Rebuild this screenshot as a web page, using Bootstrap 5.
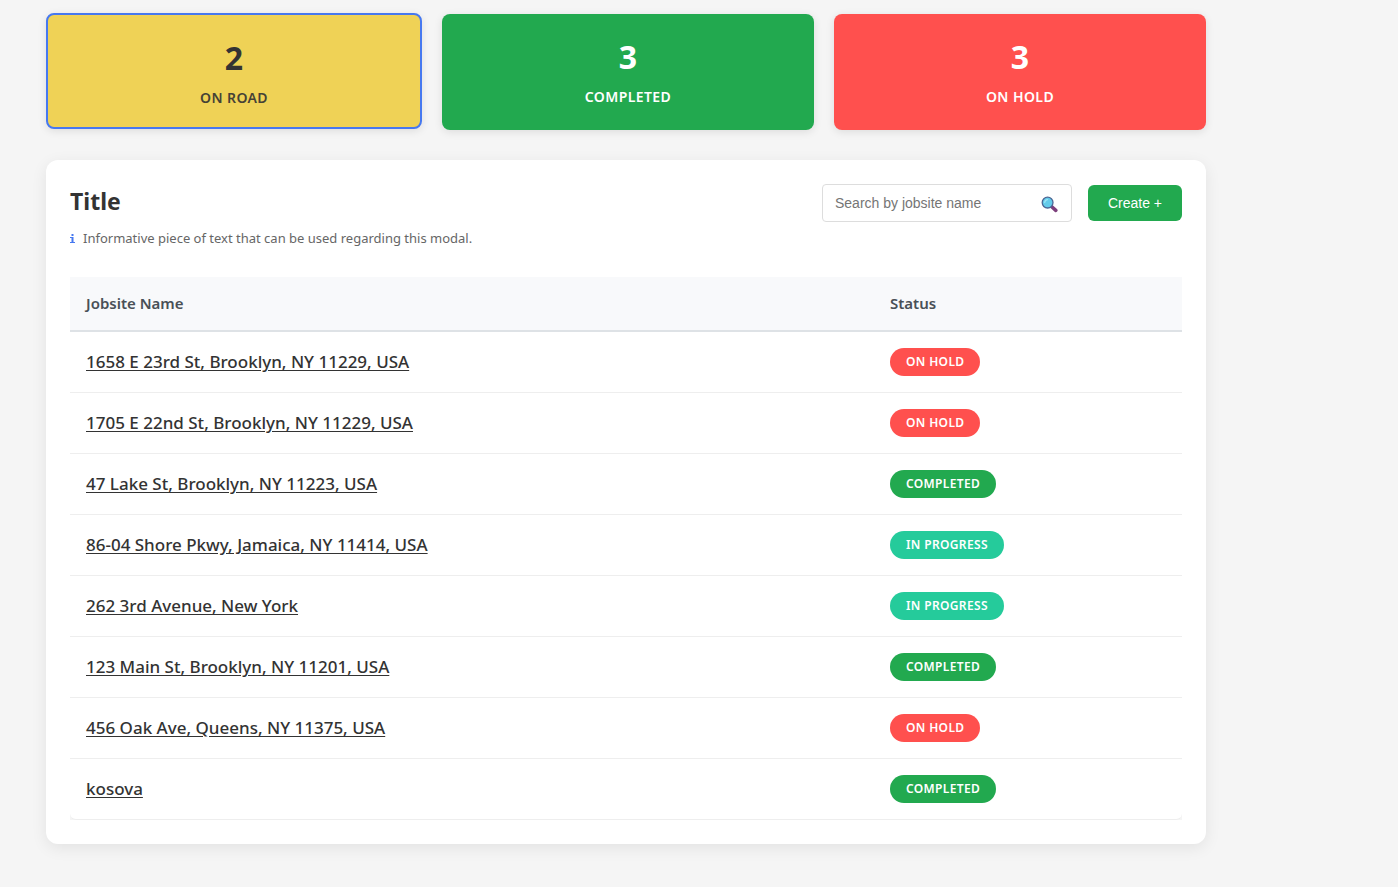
<!DOCTYPE html>
<html lang="en">
<head>
<meta charset="utf-8">
<meta name="viewport" content="width=device-width, initial-scale=1">
<title>Jobsites</title>
<link href="https://cdn.jsdelivr.net/npm/bootstrap@5.3.0/dist/css/bootstrap.min.css" rel="stylesheet">
<style>
  :root { --road: #efd256; --done: #22a94f; --hold: #ff504e; --progress: #25cb9b; --ink: #333; }
  body { background: #f5f5f5; color: var(--ink); font-family: "Segoe UI", "Noto Sans", sans-serif; }
  .page { max-width: 1206px; padding: 14px 0 43px 46px; }
  .stats { gap: 20px; margin-bottom: 30px; }
  .stat { flex: 1; padding: 24px; border: 0; border-radius: 8px; box-shadow: 0 2px 8px rgba(0,0,0,.1); height: 116px; color: #fff; }
  .stat-number { font-size: 32px; line-height: 38px; font-weight: 700; }
  .stat-label { font-size: 14px; line-height: 20px; font-weight: 600; margin-top: 11px; letter-spacing: .03em; }
  .stat-road { background: var(--road); color: var(--ink); }
  .stat-road.active { border: 2px solid #4678f0; transform: translateY(-1px); }
  .stat-road .stat-label { opacity: .9; }
  .bg-done { background: var(--done); }
  .bg-hold { background: var(--hold); }
  .bg-progressing { background: var(--progress); }
  .panel { background: #fff; border-radius: 12px; padding: 24px; box-shadow: 0 4px 16px rgba(0,0,0,.08); }
  .panel-title { font-size: 23px; line-height: 34px; font-weight: 700; margin: 0; }
  .info { font-size: 13px; line-height: 20px; color: #666; margin: 6px 0 29px; gap: 8px; }
  .info svg { width: 5px; height: 9px; fill: #4678f0; }
  .search { width: 250px; }
  .search input { height: 38px; border: 1px solid #ddd; border-radius: 4px; padding: 0 40px 0 12px; font: 14px "Liberation Sans", sans-serif; color: var(--ink); }
  .search input::placeholder { color: #757575; }
  .search svg { right: 14px; top: 12px; width: 17px; height: 17px; }
  .btn-create { background: var(--done); color: #fff; border: 0; border-radius: 6px; height: 36px; width: 94px; padding: 0; font: 14px "Liberation Sans", sans-serif; }
  .btn-create:hover { background: #1c9243; color: #fff; }
  .jobs { margin: 0; border-collapse: separate; border-spacing: 0; background: #f5f5f5; }
  .jobs th { height: 55px; padding: 0 16px; background: #f8f9fb; color: #495057; font-size: 15px; font-weight: 600; vertical-align: middle; border-bottom: 2px solid #dee2e6; }
  .jobs td { height: 61px; padding: 0 16px; background: #fff; border-bottom: 1px solid #eee; }
  .jobs tr:last-child td:first-child { border-bottom-left-radius: 6px; }
  .jobs tr:last-child td:last-child { border-bottom-right-radius: 6px; }
  .jobs .col-status { width: 308px; }
  .jobs a { color: var(--ink); font-size: 17px; font-weight: 500; text-underline-offset: 2px; }
  .pill { display: inline-block; border-radius: 14px; padding: 0 16px; color: #fff; font-size: 12px; line-height: 28px; font-weight: 600; letter-spacing: .03em; vertical-align: middle; }
</style>
</head>
<body>
<main class="page">
  <section class="stats d-flex text-center">
    <div class="stat stat-road active"><div class="stat-number">2</div><div class="stat-label">ON ROAD</div></div>
    <div class="stat bg-done"><div class="stat-number">3</div><div class="stat-label">COMPLETED</div></div>
    <div class="stat bg-hold"><div class="stat-number">3</div><div class="stat-label">ON HOLD</div></div>
  </section>
  <section class="panel">
    <header class="d-flex justify-content-between align-items-start">
      <h1 class="panel-title">Title</h1>
      <div class="d-flex align-items-center gap-3">
        <div class="search position-relative">
          <input class="form-control" type="text" placeholder="Search by jobsite name" aria-label="Search by jobsite name">
          <svg class="position-absolute" viewBox="0 0 17 17" aria-hidden="true">
            <path d="M10.5 10.5l4.3 3.8" stroke="#7d3f7c" stroke-width="3.6" stroke-linecap="round"/>
            <circle cx="6.6" cy="6.6" r="5.4" fill="#63cbea" stroke="#4b6795" stroke-width="1.3"/>
            <path d="M3.7 6.5a3.2 3.2 0 0 1 2.8-2.9" fill="none" stroke="#9de4f6" stroke-width="1.2" stroke-linecap="round"/>
          </svg>
        </div>
        <button class="btn btn-create" type="button">Create +</button>
      </div>
    </header>
    <p class="info d-flex align-items-center">
      <svg viewBox="0 0 5 9" aria-hidden="true"><path d="M1.5 0h2v2h-2zM0 3h3.5v5H5v1H0V8h1.5V4H0z"/></svg>
      <span>Informative piece of text that can be used regarding this modal.</span>
    </p>
    <table class="jobs table align-middle">
      <thead><tr><th scope="col">Jobsite Name</th><th scope="col" class="col-status">Status</th></tr></thead>
      <tbody>
        <tr><td><a href="#">1658 E 23rd St, Brooklyn, NY 11229, USA</a></td><td><span class="pill bg-hold">ON HOLD</span></td></tr>
        <tr><td><a href="#">1705 E 22nd St, Brooklyn, NY 11229, USA</a></td><td><span class="pill bg-hold">ON HOLD</span></td></tr>
        <tr><td><a href="#">47 Lake St, Brooklyn, NY 11223, USA</a></td><td><span class="pill bg-done">COMPLETED</span></td></tr>
        <tr><td><a href="#">86-04 Shore Pkwy, Jamaica, NY 11414, USA</a></td><td><span class="pill bg-progressing">IN PROGRESS</span></td></tr>
        <tr><td><a href="#">262 3rd Avenue, New York</a></td><td><span class="pill bg-progressing">IN PROGRESS</span></td></tr>
        <tr><td><a href="#">123 Main St, Brooklyn, NY 11201, USA</a></td><td><span class="pill bg-done">COMPLETED</span></td></tr>
        <tr><td><a href="#">456 Oak Ave, Queens, NY 11375, USA</a></td><td><span class="pill bg-hold">ON HOLD</span></td></tr>
        <tr><td><a href="#">kosova</a></td><td><span class="pill bg-done">COMPLETED</span></td></tr>
      </tbody>
    </table>
  </section>
</main>
<script src="https://cdn.jsdelivr.net/npm/bootstrap@5.3.0/dist/js/bootstrap.bundle.min.js"></script>
</body>
</html>
